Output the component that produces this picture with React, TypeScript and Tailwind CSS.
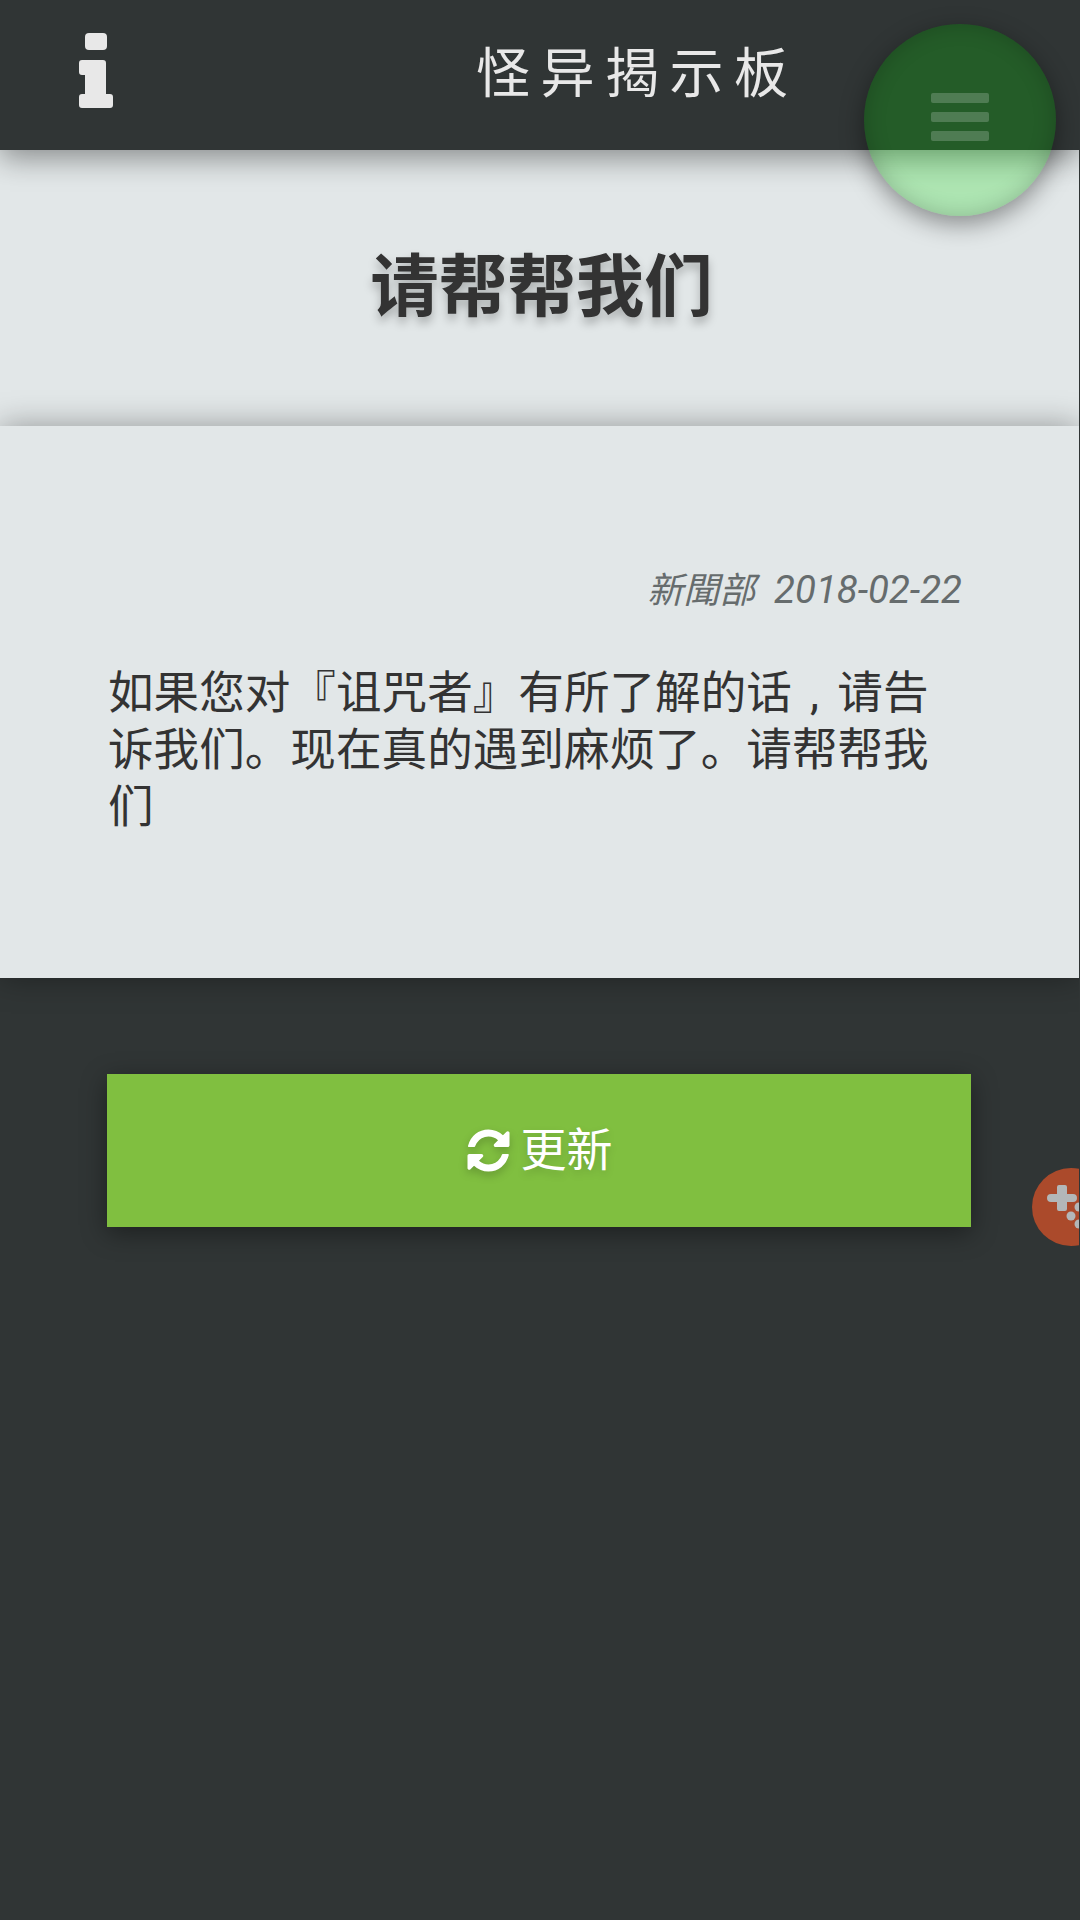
const cjk = "font-['Roboto','Noto_Sans_CJK_SC',sans-serif]";

const InfoIcon = () => (
  <svg viewBox="0 0 34 75" className="w-[34px] h-[75px]" fill="#e8e8e8">
    <rect x="6" y="0" width="22" height="17" rx="4" />
    <path d="M3 27h21a3 3 0 0 1 3 3v31h4a3 3 0 0 1 3 3v8a3 3 0 0 1-3 3H3a3 3 0 0 1-3-3v-8a3 3 0 0 1 3-3h3V42H3a3 3 0 0 1-3-3v-9a3 3 0 0 1 3-3z" />
  </svg>
);

const RefreshIcon = () => (
  <svg viewBox="0 0 1792 1792" className="w-[49px] h-[49px] drop-shadow-[0_4px_4px_rgba(0,0,0,0.2)]" fill="#ffffff">
    <path d="M1639 1056q0 5-1 7-64 268-268 434.500t-478 166.500q-146 0-282.500-55t-243.500-157l-129 129q-19 19-45 19t-45-19-19-45v-448q0-26 19-45t45-19h448q26 0 45 19t19 45-19 45l-137 137q71 66 161 102t187 36q134 0 250-65t186-179q11-17 53-117 8-23 30-23h192q13 0 22.500 9.500t9.500 22.500zm25-800v448q0 26-19 45t-45 19h-448q-26 0-45-19t-19-45 19-45l138-138q-148-137-349-137-134 0-250 65t-186 179q-11 17-53 117-8 23-30 23h-199q-13 0-22.500-9.500t-9.500-22.500v-7q65-268 270-434.500t480-166.500q146 0 284 55.500t245 156.500l130-129q19-19 45-19t45 19 19 45z" />
  </svg>
);

const GamepadIcon = () => (
  <svg viewBox="0 0 78 78" className="w-[78px] h-[78px]" fill="#b3b7b8">
    <path d="M27 17h6a2 2 0 0 1 2 2v7h6a4 4 0 0 1 0 8h-6v7a2 2 0 0 1-2 2h-6a2 2 0 0 1-2-2v-7h-6a4 4 0 0 1 0-8h6v-7a2 2 0 0 1 2-2z" />
    <circle cx="39" cy="48" r="4.500" />
    <circle cx="47" cy="39" r="4.500" />
    <circle cx="47" cy="56" r="4.500" />
  </svg>
);

export default function App() {
  return (
    <div className={`relative w-[1080px] h-[1920px] overflow-hidden bg-[#303535] border-r border-[#303535] ${cjk}`}>
      {/* header */}
      <header className="relative z-20 h-[150px] bg-[#303535] shadow-[0_8px_28px_rgba(0,0,0,0.4)] flex items-center">
        <div className="ml-[79px] -mt-[9px]">
          <InfoIcon />
        </div>
        <h1 className="absolute left-[476px] top-[43px] text-[54px] leading-[64px] tracking-[10.500px] font-normal text-[#e8e8e8] whitespace-nowrap">
          怪异揭示板
        </h1>
      </header>

      {/* title */}
      <section className="h-[276px] bg-[#e2e7e8] flex items-center justify-center pl-[4px]">
        <h2 className="text-[68.500px] leading-[80px] font-bold text-[#333333] [text-shadow:0_6px_10px_rgba(0,0,0,0.25)]">
          请帮帮我们
        </h2>
      </section>

      {/* article */}
      <section className="relative z-10 h-[552px] bg-[#e2e7e8] shadow-[0_0_30px_rgba(0,0,0,0.35)] pt-[136px] pl-[108px] pr-[117px]">
        <div className="text-right text-[38.400px] leading-[56px] italic font-normal text-[#666c6d] whitespace-pre">
          <span className="text-[36px]">新聞部</span>  2018-02-22
        </div>
        <p className="mt-[46px] text-[45.600px] leading-[57px] text-[#333333] [word-spacing:6.900px]">
          如果您对『诅咒者』有所了解的话 , 请告诉我们。现在真的遇到麻烦了。请帮帮我们
        </p>
      </section>

      {/* update button */}
      <div className="px-[107px] pt-[96px]">
        <button className="w-[864px] h-[153px] pr-[2px] bg-[#80bf40] shadow-[0_6px_24px_rgba(0,0,0,0.4)] flex items-center justify-center gap-[8px] text-[46px] text-white [text-shadow:0_4px_8px_rgba(0,0,0,0.15)]">
          <RefreshIcon />
          <span>更新</span>
        </button>
      </div>

      {/* floating menu */}
      <div className="absolute z-30 left-[864px] top-[24px] w-[192px] h-[192px] rounded-full bg-[rgba(0,226,0,0.23)] shadow-[0_8px_24px_rgba(0,0,0,0.4),inset_0_0_22px_rgba(0,0,0,0.2)] flex flex-col items-center justify-center gap-[9px] pb-[6px]">
        <span className="w-[58px] h-[10px] rounded-[2px] bg-white/20" />
        <span className="w-[58px] h-[10px] rounded-[2px] bg-white/20" />
        <span className="w-[58px] h-[10px] rounded-[2px] bg-white/20" />
      </div>

      {/* floating game button */}
      <div className="absolute z-30 left-[1032px] top-[1168px] w-[78px] h-[78px] rounded-full bg-[#ab4a2b]">
        <GamepadIcon />
      </div>
    </div>
  );
}
